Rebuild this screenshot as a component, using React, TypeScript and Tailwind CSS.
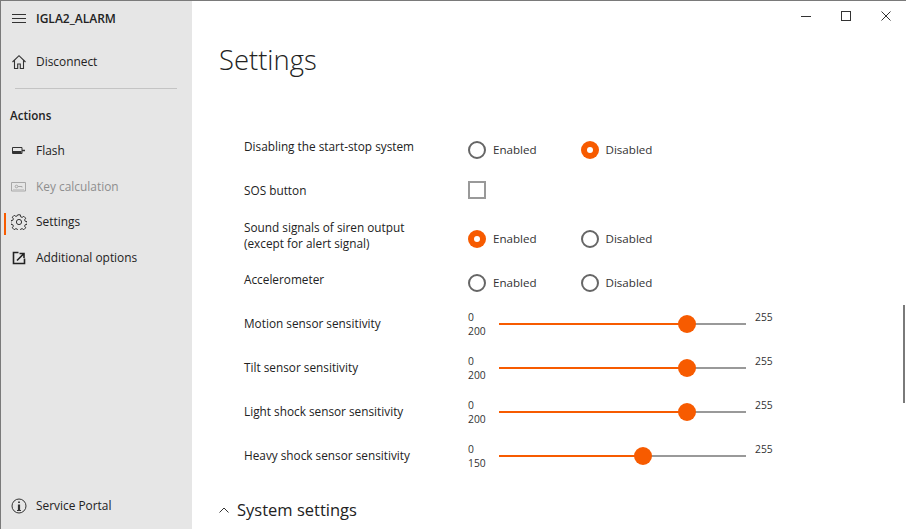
import type { ReactNode } from "react";

const font = { fontFamily: '"Open Sans", "Noto Sans", sans-serif' };

function MenuIcon() {
  return (
    <svg width="16" height="16" viewBox="0 0 16 16" fill="none" stroke="#333" strokeWidth="1">
      <path d="M1 3.5h14M1 7.5h14M1 11.5h14" />
    </svg>
  );
}

function HomeIcon() {
  return (
    <svg width="16" height="16" viewBox="0 0 16 16" fill="none" stroke="#333" strokeWidth="1.1">
      <path d="M1.5 8 8 1.7 14.5 8M3.5 6.5v8h3.2V10h2.6v4.5h3.2v-8" />
    </svg>
  );
}

function FlashIcon() {
  return (
    <svg width="16" height="16" viewBox="0 0 16 16" fill="none" stroke="#333">
      <path d="M1.5 4.5H11v6H1.5z" />
      <path d="M2 9h8.5" strokeWidth="2" />
      <path d="M11 7.5h3" strokeWidth="1.5" />
    </svg>
  );
}

function KeyIcon() {
  return (
    <svg width="16" height="16" viewBox="0 0 16 16" fill="none" stroke="#999">
      <path d="M.5 3.5h14V12H.5z" />
      <path d="M2 10.5h11" stroke="#c4c4c4" />
      <circle cx="5.5" cy="7.5" r="1.3" />
      <path d="M7 7.5h4v1" />
    </svg>
  );
}

function GearIcon() {
  return (
    <svg width="16" height="16" viewBox="0 0 16 16" fill="none" stroke="#333" strokeWidth="1">
      <circle cx="8" cy="8" r="2.6" />
      <path d="M6.7.8h2.6l.4 2 1.4.6 1.7-1.1 1.9 1.9-1.1 1.7.6 1.4 2 .4v2.6l-2 .4-.6 1.4 1.1 1.7-1.9 1.9-1.7-1.1-1.4.6-.4 2H6.7l-.4-2-1.4-.6-1.7 1.1-1.9-1.9 1.1-1.7-.6-1.4-2-.4V6.7l2-.4.6-1.4-1.1-1.7 1.9-1.9 1.7 1.1 1.4-.6z" />
    </svg>
  );
}

function OpenIcon() {
  return (
    <svg width="16" height="16" viewBox="0 0 16 16" fill="none" stroke="#222">
      <path d="M7.5 2.5h-5v11h11v-5" strokeWidth="1.6" />
      <path d="M6 10.5 12.5 4M8.5 3.5H13V8" strokeWidth="1.6" />
    </svg>
  );
}

function InfoIcon() {
  return (
    <svg width="16" height="16" viewBox="0 0 16 16" fill="none" stroke="#333">
      <circle cx="8" cy="8" r="7" />
      <path d="M8 6.5V12" strokeWidth="2.2" />
      <path d="M8 3.5V5" strokeWidth="1.8" />
      <path d="M6 12.5h4" />
    </svg>
  );
}

function NavItem({
  icon,
  label,
  active,
  disabled,
}: {
  icon: ReactNode;
  label: string;
  active?: boolean;
  disabled?: boolean;
}) {
  return (
    <div className="relative flex h-[35.5px] items-center pl-[10px]">
      {active && <div className="absolute left-[3px] top-[8px] h-[22px] w-[2px] bg-[#f75b00]" />}
      <div className={disabled ? "w-[25px] opacity-80" : "w-[25px]"}>{icon}</div>
      <span className={disabled ? "text-[11.9px] text-[#8e8e8e]" : "text-[11.9px] text-[#222]"}>{label}</span>
    </div>
  );
}

function Radio({ checked, label }: { checked?: boolean; label: string }) {
  return (
    <div className="flex w-[112.5px] items-center gap-[7px]">
      {checked ? (
        <div className="flex h-[18px] w-[18px] items-center justify-center rounded-full bg-[#f75b00]">
          <div className="h-[6px] w-[6px] rounded-full bg-white" />
        </div>
      ) : (
        <div className="h-[18px] w-[18px] rounded-full border-2 border-[#666]" />
      )}
      <span className="text-[11.6px] text-[#333]">{label}</span>
    </div>
  );
}

function Slider({ label, value, percent }: { label: string; value: number; percent: number }) {
  return (
    <div className="flex h-[44px] items-center">
      <div className="mt-[2px] w-[224px] text-[11.8px] text-[#222]">{label}</div>
      <div className="mt-[1px] flex w-[31px] flex-col text-[10.3px] leading-[14px] text-[#333]">
        <span>0</span>
        <span>{value}</span>
      </div>
      <div className="relative mt-[2px] h-[2px] w-[247px] bg-[#999]">
        <div className="h-full bg-[#f75b00]" style={{ width: `${percent}%` }} />
        <div
          className="absolute top-[-8px] ml-[-9px] h-[18px] w-[18px] rounded-full bg-[#f75b00]"
          style={{ left: `${percent}%` }}
        />
      </div>
      <div className="mb-[10px] ml-[9px] text-[10.3px] text-[#333]">255</div>
    </div>
  );
}

export default function App() {
  return (
    <div className="flex h-[529px] w-[906px] overflow-hidden bg-white" style={font}>
      <aside className="flex w-[192px] shrink-0 flex-col border-l border-t border-[#7a7a7a] bg-[#e6e6e6]">
        <div className="flex h-[36px] items-center pl-[10px]">
          <div className="w-[25px]">
            <MenuIcon />
          </div>
          <span className="text-[12px] font-semibold text-[#222]">IGLA2_ALARM</span>
        </div>
        <div className="mt-[7px]">
          <NavItem icon={<HomeIcon />} label="Disconnect" />
        </div>
        <div className="ml-[14px] mr-[15px] mt-[8px] h-px bg-[#c4c4c4]" />
        <div className="pl-[9px] pt-[17px] text-[11.6px] font-semibold leading-[20px] text-[#222]">Actions</div>
        <div className="mt-[8px]">
          <NavItem icon={<FlashIcon />} label="Flash" />
          <NavItem icon={<KeyIcon />} label="Key calculation" disabled />
          <NavItem icon={<GearIcon />} label="Settings" active />
          <NavItem icon={<OpenIcon />} label="Additional options" />
        </div>
        <div className="mt-auto pb-[5px]">
          <NavItem icon={<InfoIcon />} label="Service Portal" />
        </div>
      </aside>

      <main className="relative flex min-w-0 flex-1 flex-col border-t border-[#7a7a7a]">
        <div className="flex h-[30px] justify-end">
          <div className="flex w-[40px] items-center justify-center">
            <div className="h-px w-[10px] bg-[#333]" />
          </div>
          <div className="flex w-[40px] items-center justify-center">
            <div className="h-[10px] w-[10px] border border-[#333]" />
          </div>
          <div className="flex w-[40px] items-center justify-center">
            <svg width="10" height="10" viewBox="0 0 10 10" stroke="#333" strokeWidth="1">
              <path d="M.5.5l9 9M9.5.5l-9 9" />
            </svg>
          </div>
        </div>
        <h1 className="ml-[27px] mt-[7px] text-[27.4px] font-light leading-[44px] text-[#222]">Settings</h1>

        <div className="mt-[48px] pl-[52px]">
          <div className="flex h-[40px] items-center">
            <div className="mb-[6px] w-[224px] text-[11.8px] text-[#222]">Disabling the start-stop system</div>
            <Radio label="Enabled" />
            <Radio label="Disabled" checked />
          </div>
          <div className="flex h-[40px] items-center">
            <div className="mt-[2px] w-[224px] text-[11.8px] text-[#222]">SOS button</div>
            <div className="h-[18px] w-[18px] border-2 border-[#999]" />
          </div>
          <div className="flex h-[58px] items-center">
            <div className="mb-[8px] w-[224px] text-[11.8px] leading-[16px] text-[#222]">
              Sound signals of siren output
              <br />
              (except for alert signal)
            </div>
            <Radio label="Enabled" checked />
            <Radio label="Disabled" />
          </div>
          <div className="flex h-[30px] items-center">
            <div className="mb-[6px] w-[224px] text-[11.8px] text-[#222]">Accelerometer</div>
            <Radio label="Enabled" />
            <Radio label="Disabled" />
          </div>
          <div className="mt-[3px]">
            <Slider label="Motion sensor sensitivity" value={200} percent={76} />
            <Slider label="Tilt sensor sensitivity" value={200} percent={76} />
            <Slider label="Light shock sensor sensitivity" value={200} percent={76} />
            <Slider label="Heavy shock sensor sensitivity" value={150} percent={58.3} />
          </div>
        </div>

        <div className="ml-[27px] mt-[14px] flex h-[38px] items-center gap-[8px] text-[#222]">
          <svg width="10" height="6" viewBox="0 0 10 6" fill="none" stroke="#333" strokeWidth="1">
            <path d="M.5 5.5 5 1l4.5 4.5" />
          </svg>
          <span className="text-[16.5px]">System settings</span>
        </div>

        <div className="absolute right-[1px] top-[304px] h-[98px] w-[2px] bg-[#7a7a7a]" />
      </main>
    </div>
  );
}
